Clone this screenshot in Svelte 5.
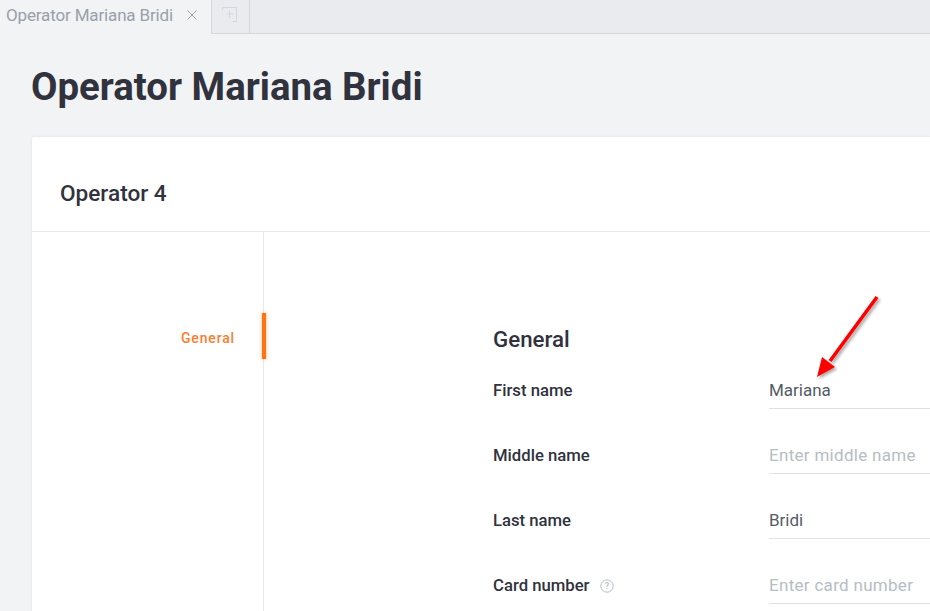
<script>
  const fields = [
    { label: 'First name', value: 'Mariana' },
    { label: 'Middle name', placeholder: 'Enter middle name' },
    { label: 'Last name', value: 'Bridi' },
    { label: 'Card number', placeholder: 'Enter card number', help: true }
  ];
</script>

<div class="page">
  <div class="tabs">
    <div class="tab">
      <span class="tab-name">Operator Mariana Bridi</span>
      <svg class="close" width="10" height="10" viewBox="0 0 10 10"><path d="M0.5 0.5L9.5 9.5M9.5 0.5L0.5 9.5" stroke="#9aa2ad" stroke-width="1" fill="none"/></svg>
    </div>
    <div class="add">
      <svg width="15" height="15" viewBox="0 0 15 15"><path d="M.5 3V.5H14.5V14.5H10.5M7.5 3.5V10.5M4 7H11" stroke="#d3d6dc" stroke-width="1" fill="none"/></svg>
    </div>
  </div>
  <h1>Operator Mariana Bridi</h1>
  <div class="card">
    <div class="card-head">Operator 4</div>
    <div class="card-body">
      <nav class="side">
        <span class="side-item">General</span>
        <span class="marker"></span>
      </nav>
      <section class="form">
        <h2>General</h2>
        {#each fields as f}
          <div class="row">
            <div class="label">
              {f.label}
              {#if f.help}
                <svg class="help" width="14" height="14" viewBox="0 0 14 14"><circle cx="7" cy="7" r="6.2" stroke="#b5bbc3" fill="none"/><text x="7" y="10" text-anchor="middle" font-size="9" fill="#b5bbc3">?</text></svg>
              {/if}
            </div>
            <div class="field" class:empty={!f.value}>{f.value ?? f.placeholder}</div>
          </div>
        {/each}
      </section>
    </div>
  </div>
  <svg class="arrow" width="70" height="90" viewBox="0 0 70 90">
    <defs><filter id="sh" x="-30%" y="-30%" width="160%" height="160%"><feDropShadow dx="2" dy="2" stdDeviation="1.5" flood-color="#000" flood-opacity="0.35"/></filter></defs>
    <g filter="url(#sh)"><path d="M62 2L15 66" stroke="#f00" stroke-width="3.6" fill="none"/><path d="M2 82L7 62L20 72Z" fill="#f00"/></g>
  </svg>
</div>

<style>
  :global(body) { margin: 0; background: #f2f3f5; }
  .page { position: relative; width: 930px; height: 611px; overflow: hidden; font-family: Roboto, "Noto Sans", sans-serif; color: #30323d; }
  .tabs { display: flex; height: 33px; background: #e9ebef; border-bottom: 1px solid #d5d7dd; }
  .tab { width: 212px; height: 34px; box-sizing: border-box; background: #f2f3f5; padding: 0 0 4px 6px; display: flex; align-items: center; gap: 14px; border-right: 1px solid #d5d7dd; }
  .tab-name { font-size: 17px; letter-spacing: -.15px; color: #98a0ab; white-space: nowrap; width: 167px; }
  .add { width: 38px; box-sizing: border-box; border-right: 1px solid #d5d7dd; display: flex; justify-content: center; align-items: center; padding: 0 2px 5px 0; }
  h1 { margin: 0; padding: 29px 0 0 31px; font-size: 38.4px; line-height: 48px; font-weight: 700; height: 74px; }
  .card { margin-left: 32px; background: #fff; box-shadow: 0 0 3px rgba(0,0,0,.08); border-radius: 2px 0 0 0; height: 500px; }
  .card-head { height: 95px; box-sizing: border-box; padding: 42px 0 0 28px; font-size: 22.6px; line-height: 30px; font-weight: 500; border-bottom: 1px solid #e8e9ec; }
  .card-body { display: flex; height: 400px; }
  .side { position: relative; width: 232px; box-sizing: border-box; border-right: 1px solid #e8e9ec; padding: 96px 28px 0 0; text-align: right; }
  .side-item { font-size: 14px; line-height: 20px; color: #fb7d2f; font-weight: 500; letter-spacing: .85px; }
  .marker { position: absolute; right: -3px; top: 81px; width: 4px; height: 46px; background: #ff7310; box-shadow: 0 0 4px rgba(255,115,16,.45); }
  .form { padding: 92px 0 0 229px; flex: 1; }
  h2 { margin: 0; font-size: 22.3px; line-height: 30px; font-weight: 500; height: 46px; }
  .row { display: flex; height: 65px; }
  .label { width: 276px; font-size: 16.7px; font-weight: 500; line-height: 22px; padding-top: 10px; display: flex; align-items: flex-start; gap: 10px; }
  .help { margin-top: 4px; }
  .field { flex: 1; height: 39px; box-sizing: border-box; border-bottom: 1px solid #dfe1e4; font-size: 17px; line-height: 22px; padding-top: 9px; color: #555b66; }
  .field.empty { color: #b6bdc4; letter-spacing: .3px; }
  .arrow { position: absolute; left: 815px; top: 295px; }
</style>
